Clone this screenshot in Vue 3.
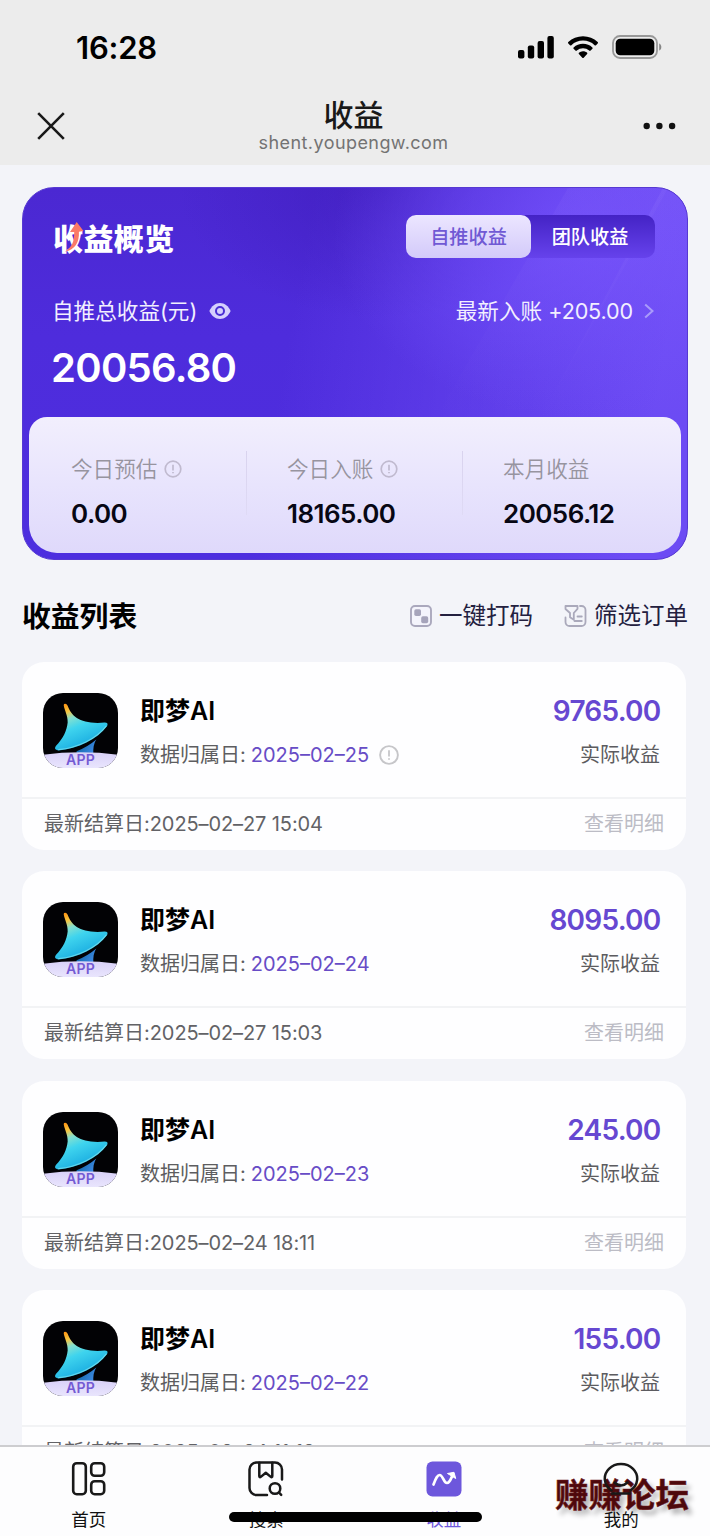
<script setup>
const stats = [
  { label: '今日预估', value: '0.00', hint: true },
  { label: '今日入账', value: '18165.00', hint: true },
  { label: '本月收益', value: '20056.12', hint: false },
]

const items = [
  { date: '2025–02–25', amount: '9765.00', settled: '2025–02–27 15:04', hint: true },
  { date: '2025–02–24', amount: '8095.00', settled: '2025–02–27 15:03', hint: false },
  { date: '2025–02–23', amount: '245.00', settled: '2025–02–24 18:11', hint: false },
  { date: '2025–02–22', amount: '155.00', settled: '2025–02–24 11:18', hint: false },
]
</script>

<template>
  <div class="screen">
    <header class="top">
      <div class="status">
        <span class="time">16:28</span>
        <div class="signals">
          <svg class="bars" width="36" height="23" viewBox="0 0 36 23">
            <rect x="0" y="14" width="6.4" height="8.4" rx="2" />
            <rect x="9.8" y="9.5" width="6.4" height="12.9" rx="2" />
            <rect x="19.6" y="5" width="6.4" height="17.4" rx="2" />
            <rect x="29.4" y="0" width="6.4" height="22.4" rx="2" />
          </svg>
          <svg class="wifi" width="30" height="23" viewBox="0 0 30 23">
            <path d="M15 .2c5.600 0 10.800 2.100 14.700 5.900.4.400.4 1 0 1.400l-1.700 1.700c-.4.400-1 .4-1.400 0A16.800 16.800 0 0 0 15 4.600 16.800 16.800 0 0 0 3.400 9.200c-.4.400-1 .4-1.400 0L.3 7.500c-.4-.4-.4-1 0-1.400C4.200 2.300 9.400.2 15 .2z" />
            <path d="M15 7.800c3.600 0 6.900 1.300 9.400 3.600.4.400.4 1 0 1.400l-1.800 1.800c-.4.400-1 .4-1.400 0a9.300 9.300 0 0 0-12.400 0c-.4.400-1 .4-1.400 0l-1.800-1.800c-.4-.4-.4-1 0-1.400A13.900 13.900 0 0 1 15 7.800z" />
            <path d="M15 15.200c1.600 0 3 .5 4.100 1.500.4.300.4.900 0 1.300l-3.400 3.700c-.4.400-1 .4-1.400 0L10.900 18c-.4-.4-.4-1 0-1.300a6 6 0 0 1 4.100-1.500z" />
          </svg>
          <svg width="50" height="24" viewBox="0 0 50 24">
            <rect x="1" y="1" width="44" height="22" rx="7" fill="none" stroke="#989898" stroke-width="1.8" />
            <rect x="3.700" y="3.700" width="38.600" height="16.600" rx="4.500" />
            <path d="M47.200 8.400c2.800 1.200 2.800 6 0 7.200z" fill="#858585" />
          </svg>
        </div>
      </div>
      <div class="nav">
        <svg class="close" width="28" height="28" viewBox="0 0 28 28" fill="none" stroke="#191919" stroke-width="2.600">
          <path d="M1.200 1.200l25.600 25.600M26.800 1.200L1.200 26.800" />
        </svg>
        <div class="heading">
          <h1>收益</h1>
          <p>shent.youpengw.com</p>
        </div>
        <svg class="more" width="33" height="8" viewBox="0 0 33 8" fill="#111">
          <circle cx="3.700" cy="4" r="3.200" /><circle cx="16.400" cy="4" r="3.200" /><circle cx="29.100" cy="4" r="3.200" />
        </svg>
      </div>
    </header>

    <main>
      <section class="overview">
        <svg class="rays" width="666" height="372" viewBox="0 0 666 372">
          <defs>
            <linearGradient id="ray" x1="0" y1="0" x2="0" y2="1">
              <stop offset="0" stop-color="#b59dff" stop-opacity=".3" />
              <stop offset="1" stop-color="#a58aff" stop-opacity="0" />
            </linearGradient>
          </defs>
          <path d="M545 0H645L515 235H410z" fill="url(#ray)" opacity=".22" />
          <path d="M640 0H666V235H515z" fill="url(#ray)" opacity=".35" />
        </svg>
        <div class="overview-head">
          <div class="overview-title">
            <h2>收益概览</h2>
            <svg class="rise" width="22" height="34" viewBox="0 0 22 34">
              <path d="M2 31.500C9 27 11.300 22 11.200 12H7L13.700 2 20.500 11l-4.600.7C16.500 22 12 30 2 31.500z" fill="#fb7a68" />
            </svg>
          </div>
          <div class="switch">
            <span class="on">自推收益</span>
            <span class="off">团队收益</span>
          </div>
        </div>
        <div class="overview-line">
          <span class="caption">自推总收益(元)</span>
          <svg class="eye" width="22" height="18" viewBox="0 0 22 18">
            <path d="M.4 9C2.500 4.200 6.300 1 11 1s8.500 3.200 10.600 8c-2.100 4.800-5.900 8-10.600 8S2.500 13.800.4 9z" fill="#d6d0fd" />
            <circle cx="11" cy="9" r="4" fill="#d6d0fd" stroke="#4b2ed5" stroke-width="2" />
          </svg>
          <span class="latest">最新入账 <span>+205.00</span></span>
          <svg class="chev" width="10" height="16" viewBox="0 0 10 16" fill="none" stroke="#a99bfa" stroke-width="2">
            <path d="M1.200 1.500L8.500 8l-7.300 6.500" />
          </svg>
        </div>
        <div class="total">20056.80</div>
        <div class="stats">
          <div v-for="s in stats" :key="s.label" class="stat">
            <div class="stat-label">
              <span>{{ s.label }}</span>
              <svg v-if="s.hint" width="18" height="18" viewBox="0 0 18 18" fill="none" stroke="#c0bacf">
                <circle cx="9" cy="9" r="7.800" stroke-width="1.700" />
                <path d="M9 4.800v5.800M9 12v1.300" stroke-width="1.700" />
              </svg>
            </div>
            <div class="stat-value">{{ s.value }}</div>
          </div>
        </div>
      </section>

      <div class="list-head">
        <h3>收益列表</h3>
        <div class="action">
          <svg width="22" height="22" viewBox="0 0 22 22">
            <rect x="1" y="1" width="20" height="20" rx="4" fill="#f4f4fc" stroke="#aaa8bd" stroke-width="1.900" />
            <rect x="4.300" y="4.300" width="6.700" height="6.700" rx="1.700" fill="#a6a4bb" />
            <rect x="11.200" y="11.200" width="7" height="7" rx="1.700" fill="#a6a4bb" />
          </svg>
          <span>一键打码</span>
        </div>
        <div class="action filter">
          <svg width="23" height="22" viewBox="0 0 23 22" fill="none" stroke="#aaa9bb" stroke-width="1.800" stroke-linejoin="round" stroke-linecap="round">
            <path d="M16 1h1.500a4 4 0 0 1 4 4v12a4 4 0 0 1-4 4h-12a4 4 0 0 1-4-4v-4.500" />
            <path d="M1.500 1h12v2.800L9.800 8v6.800L6 12.300V8L1.500 4z" />
            <path d="M13.500 11.500h4.300M10.500 16h7.300" />
          </svg>
          <span>筛选订单</span>
        </div>
      </div>

      <article v-for="item in items" :key="item.date" class="item">
        <div class="item-main">
          <div class="app-icon">
            <svg width="75" height="75" viewBox="0 0 76 76">
              <defs>
                <linearGradient id="sail" x1="20" y1="12" x2="40" y2="60" gradientUnits="userSpaceOnUse">
                  <stop offset="0" stop-color="#ff9412" />
                  <stop offset=".16" stop-color="#f5c642" />
                  <stop offset=".3" stop-color="#83e0d0" />
                  <stop offset=".5" stop-color="#3fd4ee" />
                  <stop offset="1" stop-color="#12a4de" />
                </linearGradient>
                <linearGradient id="hull" x1="35" y1="50" x2="54" y2="60" gradientUnits="userSpaceOnUse">
                  <stop offset="0" stop-color="#0d66a5" />
                  <stop offset="1" stop-color="#438dea" />
                </linearGradient>
                <linearGradient id="tag" x1="0" y1="60" x2="0" y2="76" gradientUnits="userSpaceOnUse">
                  <stop offset="0" stop-color="#d9d1f8" />
                  <stop offset="1" stop-color="#e9e5fd" />
                </linearGradient>
              </defs>
              <rect width="76" height="76" fill="#020205" />
              <path d="M34 59Q46 54 54 47Q50.500 52 51 62H34z" fill="url(#hull)" />
              <path d="M21.300 11.200Q23.500 9.800 25 13C29 24 38 32 62.500 30Q66.500 30 65 33.500C55 47 36 56.500 15.500 58.200Q10.500 57.500 13 53.800C20.500 46 24 39 25 30C25.300 23 21.500 17 21 12.500z" fill="url(#sail)" />
              <path d="M15.500 57.400C35 55.800 54 46.500 64.300 33.300" fill="none" stroke="#b5fff5" stroke-width="1.100" opacity=".45" />
              <path d="M0 62.500Q38 57.500 76 62.500V76H0z" fill="url(#tag)" />
            </svg>
            <span>APP</span>
          </div>
          <div class="item-info">
            <div class="item-name">即梦AI</div>
            <div class="item-date">
              <span class="date-label">数据归属日:</span>
              <span class="date">{{ item.date }}</span>
              <svg v-if="item.hint" width="20" height="20" viewBox="0 0 20 20" fill="none" stroke="#c6c6c9">
                <circle cx="10" cy="10" r="8.900" stroke-width="1.900" />
                <path d="M10 5.300v6.200M10 13.200v1.500" stroke-width="1.800" />
              </svg>
            </div>
          </div>
          <div class="item-money">
            <div class="amount">{{ item.amount }}</div>
            <div class="kind">实际收益</div>
          </div>
        </div>
        <div class="item-foot">
          <span>最新结算日:<span class="settled">{{ item.settled }}</span></span>
          <span class="detail">查看明细</span>
        </div>
      </article>
    </main>

    <nav class="tabs">
      <div class="tab">
        <svg width="36" height="36" viewBox="0 0 36 36" fill="none" stroke="#191919" stroke-width="2.600">
          <rect x="2.200" y="2.200" width="12.600" height="31" rx="3.500" />
          <rect x="20.200" y="2.200" width="13" height="12.600" rx="3.500" />
          <rect x="20.200" y="20.200" width="13" height="13" rx="3.500" />
        </svg>
        <span>首页</span>
      </div>
      <div class="tab">
        <svg width="36" height="36" viewBox="0 0 36 36" fill="none" stroke="#191919" stroke-width="2.500" stroke-linecap="round" stroke-linejoin="round">
          <path d="M34 18.500V8.500a7 7 0 0 0-7-7H8.500a7 7 0 0 0-7 7V27a7 7 0 0 0 7 7h10.500" />
          <path d="M11.300 1.700v13.300q0 2 1.800.6l4.700-3.900 4.700 3.900q1.800 1.400 1.800-.6V1.700" />
          <circle cx="27" cy="27.500" r="5.300" /><path d="M31 31.500l2.200 2.300" />
        </svg>
        <span>搜索</span>
      </div>
      <div class="tab active">
        <svg width="36" height="36" viewBox="0 0 36 36">
          <rect x=".5" y=".5" width="35" height="35" rx="6" fill="#6d57dc" />
          <path d="M7.500 23.500C10 17 11.500 14 13.700 14c3.300 0 3.800 8 7.300 8 2.300 0 3.500-3 5-6.500" fill="none" stroke="#fff" stroke-width="2.700" stroke-linecap="round" />
          <path d="M21.500 12.500l6.500-1.200 1.700 6.200z" fill="#fff" stroke="#fff" stroke-linejoin="round" />
        </svg>
        <span>收益</span>
      </div>
      <div class="tab">
        <svg width="36" height="36" viewBox="0 0 36 36" fill="none" stroke="#191919" stroke-width="2.500" stroke-linecap="round">
          <path d="M8.500 29.500A16.200 14.600 0 1 1 27.500 29.500" />
          <path d="M11.500 21.500q6.500 6 13 0M9 32.500h18" />
        </svg>
        <span>我的</span>
      </div>
      <div class="home-bar"></div>
      <div class="forum">赚赚论坛</div>
    </nav>
  </div>
</template>

<style>
html, body { margin: 0; }
body { overflow: hidden; }
</style>

<style scoped>
.screen {
  width: 710px;
  height: 1536px;
  display: flex;
  flex-direction: column;
  position: relative;
  overflow: hidden;
  background: #f3f4f9;
  font-family: Inter, "Noto Sans CJK SC", sans-serif;
  color: #000;
}
h1, h2, h3, p { margin: 0; }
svg { display: block; flex: none; }
.top { height: 165px; flex: none; background: #ececec; }
.status { height: 94px; display: flex; justify-content: space-between; padding: 0 48px 0 76px; }
.time { font-size: 31px; font-weight: 600; line-height: 95px; letter-spacing: -.2px; }
.signals { display: flex; align-items: center; }
.bars { margin-right: 14px; }
.wifi { margin-right: 14px; }
.nav { height: 71px; display: flex; justify-content: space-between; padding: 0 34px 0 37px; }
.close { margin-top: 18px; }
.heading { text-align: center; width: 224px; padding-right: 1px; }
h1 { font-size: 30px; font-weight: 500; line-height: 43px; color: #191919; }
.heading p { font-size: 18px; line-height: 24px; margin-top: -6px; color: #737373; letter-spacing: .43px; white-space: nowrap; }
.more { margin-top: 28px; }

main { flex: 1; min-height: 0; overflow: hidden; padding: 22px 24px 0 22px; }
.overview {
  position: relative;
  width: 666px;
  height: 373px;
  box-sizing: border-box;
  border-radius: 32px;
  overflow: hidden;
  color: #fff;
  border: 1px solid #5639d2;
  background:
    radial-gradient(ellipse 250px 180px at 560px 50px, rgba(116, 80, 252, .8) 0%, rgba(112, 78, 250, .5) 50%, rgba(100, 70, 240, 0) 100%),
    radial-gradient(ellipse 200px 130px at 355px 0, rgba(62, 28, 186, .6) 0%, rgba(66, 32, 195, 0) 100%),
    linear-gradient(100deg, rgba(79, 45, 224, 0) 40%, #6c4bf4 92%),
    linear-gradient(180deg, #4b28d2 0%, #4e2cdc 40%, #4d2edf 100%);
  padding: 0 6px;
}
.rays { position: absolute; left: 0; top: 0; }
.overview-head { position: relative; display: flex; justify-content: space-between; padding: 27px 26px 0 24px; height: 44px; }
.overview-title { position: relative; }
h2 { font-size: 30px; line-height: 48px; font-weight: 900; letter-spacing: .4px; }
.rise { position: absolute; left: 10px; top: 5px; }
.switch {
  width: 249px; height: 43px; display: flex; border-radius: 10px;
  background: linear-gradient(180deg, #4423c5, #6642ec);
  font-size: 19.200px; line-height: 45px; text-align: center; font-weight: 500;
}
.switch .on { width: 125px; height: 43px; border-radius: 10px; background: linear-gradient(180deg, #ece6ff, #d3cafa); color: #7059d4; }
.switch .off { width: 118px; }
.overview-line { position: relative; display: flex; align-items: center; height: 40px; margin-top: 32px; padding: 0 27px 0 23px; font-size: 21.600px; line-height: 40px; color: #f2efff; }
.eye { margin-left: 12px; }
.latest { margin-left: auto; }
.latest span { letter-spacing: -.15px; }
.chev { margin-left: 11px; }
.total { position: relative; font-size: 40px; font-weight: 600; line-height: 50px; margin-top: 12px; padding-left: 22px; letter-spacing: -.7px; }
.stats {
  position: relative; height: 136px; margin-top: 24px; display: grid; grid-template-columns: 216px 216px 1fr;
  border-radius: 18px 18px 28px 28px;
  background: linear-gradient(180deg, #f2effd 0%, #e8e4fd 50%, #dfd9fb 100%);
}
.stat { position: relative; padding: 36px 0 0 42px; }
.stat + .stat::before { content: ""; position: absolute; left: 1px; top: 34px; width: 1px; height: 64px; background: linear-gradient(180deg, #d9d3ee, #dfdaf5); }
.stat-label { display: flex; align-items: center; height: 32px; font-size: 21.600px; line-height: 32px; color: #97949f; font-weight: 350; }
.stat-label svg { margin-left: 7px; }
.stat-value { font-size: 26px; font-weight: 600; line-height: 33px; margin-top: 12px; color: #070714; letter-spacing: -.55px; }

.list-head { display: flex; align-items: center; height: 50px; margin: 31px -2px 0 0; }
h3 { font-size: 28.800px; font-weight: 600; line-height: 51px; margin-right: auto; }
.action { display: flex; align-items: center; font-size: 23.500px; color: #23203f; line-height: 50px; }
.action span { margin-left: 7px; }
.filter { margin-left: 31px; }

.item { height: 187.800px; margin-bottom: 21.600px; border-radius: 22px; background: #fefeff; }
.list-head + .item { margin-top: 21px; }
.item-main { height: 137px; display: flex; box-sizing: border-box; padding: 31px 26px 0 21px; border-bottom: 2px solid #f2f3f5; }
.app-icon { position: relative; width: 75px; height: 75px; border-radius: 20px; overflow: hidden; }
.app-icon span { position: absolute; left: 0; right: 0; bottom: 0; text-align: center; font-size: 14px; line-height: 16px; font-weight: 600; letter-spacing: .3px; color: #745ad3; }
.item-info { margin-left: 22px; }
.item-name { font-size: 25px; font-weight: 600; line-height: 37px; }
.item-date { display: flex; align-items: center; font-size: 20px; line-height: 50px; height: 50px; color: #5d5d60; }
.date { margin-left: 5px; color: #674cc6; }
.item-date svg { margin-left: 10px; }
.item-money { margin-left: auto; text-align: right; }
.amount { font-size: 28px; font-weight: 600; line-height: 36px; color: #6648d1; letter-spacing: -.75px; margin-right: -.5px; }
.kind { font-size: 20px; line-height: 50px; margin-top: 1px; color: #5c5c60; }
.item-foot { height: 50px; padding: 0 22px; display: flex; justify-content: space-between; font-size: 20px; line-height: 50px; color: #626266; }
.settled { letter-spacing: -.1px; }
.detail { color: #bcbcc5; }

.tabs { position: relative; height: 91px; box-sizing: border-box; flex: none; display: grid; grid-template-columns: repeat(4, 1fr); background: #fdfdfe; border-top: 2px solid #cdcdd0; z-index: 0; }
.tab { display: flex; flex-direction: column; align-items: center; padding-top: 14px; font-size: 17.500px; }
.tab span { line-height: 30px; margin-top: 8px; color: #111; }
.tab.active span { color: #6d57dc; }
.home-bar { position: absolute; left: 229px; top: 65px; width: 253px; height: 10px; border-radius: 5px; background: #000; }
.forum { position: absolute; z-index: -1; left: 555px; top: 22px; font-family: "Noto Sans CJK SC", sans-serif; font-size: 33.500px; line-height: 48px; font-weight: 700; color: #4d090c; -webkit-text-stroke: .5px #741c20; white-space: nowrap; text-shadow: 4px 5px 5px rgba(0, 0, 0, .3); }
</style>
